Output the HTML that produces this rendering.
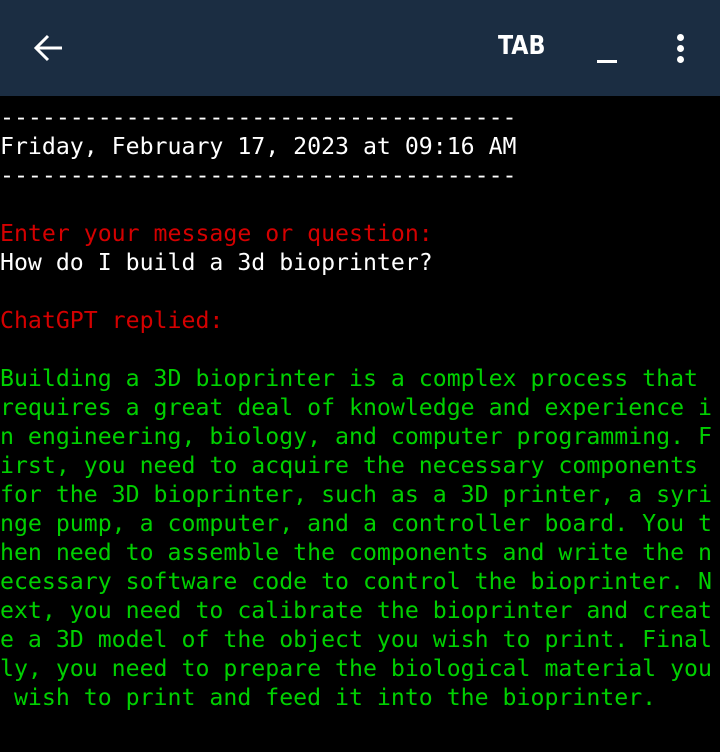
<!DOCTYPE html>
<html><head><meta charset="utf-8"><style>
html,body{margin:0;padding:0;background:#000;width:720px;height:752px;overflow:hidden}
.bar{position:absolute;left:0;top:0;width:720px;height:96px;background:#1b2d42}
.tab{position:absolute;left:498px;top:31px;color:#fff;font:600 26px "DejaVu Sans Condensed","Liberation Sans Narrow","Liberation Sans",sans-serif;transform:scaleX(0.95);transform-origin:left}
.us{position:absolute;left:597px;top:60px;width:20px;height:3px;background:#fff}
.dot{position:absolute;left:677px;width:7px;height:7px;border-radius:50%;background:#fff}
pre{position:absolute;left:0;top:103px;margin:0;font:23.2px/29px "DejaVu Sans Mono","Liberation Mono",monospace;color:#fff;white-space:pre}
.r{color:#d40000}.g{color:#00d000}
</style></head><body>
<div class="bar">
<svg style="position:absolute;left:33px;top:33px" width="32" height="30" viewBox="0 0 32 30"><path d="M29 15H4M15 3L3 15l12 12" stroke="#fff" stroke-width="3" fill="none"/></svg>
<div class="tab">TAB</div>
<div class="us"></div>
<div class="dot" style="top:34px"></div><div class="dot" style="top:45px"></div><div class="dot" style="top:56px"></div>
</div>
<pre>-------------------------------------
Friday, February 17, 2023 at 09:16 AM
-------------------------------------

<span class="r">Enter your message or question:</span>
How do I build a 3d bioprinter?

<span class="r">ChatGPT replied:</span>

<span class="g">Building a 3D bioprinter is a complex process that 
requires a great deal of knowledge and experience i
n engineering, biology, and computer programming. F
irst, you need to acquire the necessary components 
for the 3D bioprinter, such as a 3D printer, a syri
nge pump, a computer, and a controller board. You t
hen need to assemble the components and write the n
ecessary software code to control the bioprinter. N
ext, you need to calibrate the bioprinter and creat
e a 3D model of the object you wish to print. Final
ly, you need to prepare the biological material you
 wish to print and feed it into the bioprinter.</span></pre>
</body></html>
